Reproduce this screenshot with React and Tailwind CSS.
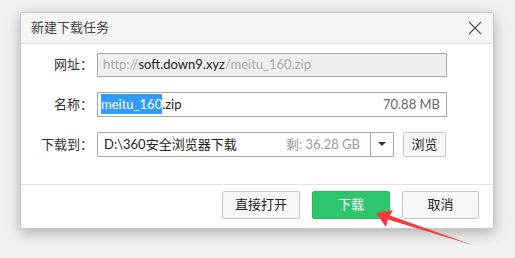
import React from "react";

const font = { fontFamily: 'Lato, "Noto Sans CJK SC", sans-serif' };

export default function App() {
  return (
    <div className="relative w-[515px] h-[258px] bg-[#f1f1f1] overflow-hidden" style={font}>
      <div className="absolute left-[20px] top-[12px] w-[474px] h-[217px] bg-white border border-[#c8c8c8] rounded-[2px] shadow-[0_4px_14px_rgba(0,0,0,0.28)] flex flex-col">
        <div className="h-[31px] bg-[#f5f5f5] border-b border-[#dedede] flex items-center justify-between pl-[10px] pr-[8px] shrink-0">
          <span className="text-[13px] text-[#444]">新建下载任务</span>
          <svg width="14" height="14" viewBox="0 0 14 14" className="mr-[3px]">
            <path d="M1 1L13 13M13 1L1 13" stroke="#555" strokeWidth="1.2" fill="none" />
          </svg>
        </div>
        <div className="flex flex-col pt-[9px] pl-[10px] gap-[15px] h-[141px] border-b border-[#e3e3e3]">
          <div className="flex items-center h-[24px]">
            <span className="w-[66px] text-right pr-[4px] text-[13px] text-[#333] whitespace-nowrap">网址：</span>
            <div className="w-[350px] h-[24px] bg-[#efefef] border border-[#a9a9a9] flex items-center px-[5px] text-[13px] text-[#aaa] whitespace-nowrap">
              http://<span className="text-[#222]">soft.down9.xyz</span>/meitu_160.zip
            </div>
          </div>
          <div className="flex items-center h-[25px]">
            <span className="w-[66px] text-right pr-[4px] text-[13px] text-[#333] whitespace-nowrap">名称：</span>
            <div className="w-[350px] h-[25px] bg-white border border-[#a9a9a9] flex items-center pl-[3px] pr-[6px] text-[13px] text-[#222] justify-between">
              <span className="whitespace-nowrap">
                <span className="bg-[#3399ff] text-white py-[2px]">meitu_160</span>.zip
              </span>
              <span className="text-[#666]">70.88 MB</span>
            </div>
          </div>
          <div className="flex items-center h-[25px]">
            <span className="w-[66px] text-right pr-[4px] text-[13px] text-[#333] whitespace-nowrap">下载到：</span>
            <div className="w-[297px] h-[25px] bg-white border border-[#a9a9a9] flex items-center text-[13px] rounded-[1px]">
              <span className="flex-1 pl-[6px] text-[#222] whitespace-nowrap">D:\360安全浏览器下载</span>
              <span className="pr-[10px] text-[#999] whitespace-nowrap">剩: 36.28 GB</span>
              <div className="w-[23px] h-full border-l border-[#a9a9a9] flex items-center justify-center">
                <svg width="8" height="5" viewBox="0 0 8 5"><path d="M0 0H8L4 4Z" fill="#333" /></svg>
              </div>
            </div>
            <button className="ml-[9px] w-[43px] h-[25px] bg-[#f7f7f7] border border-[#c9c9c9] rounded-[2px] text-[13px] text-[#222] flex items-center justify-center">浏览</button>
          </div>
        </div>
        <div className="flex items-start justify-end pt-[6px] pr-[14px] gap-[12px]">
          <button className="w-[78px] h-[28px] bg-[#f7f7f7] border border-[#c9c9c9] rounded-[2px] text-[13px] text-[#222] flex items-center justify-center">直接打开</button>
          <button className="w-[78px] h-[28px] bg-[#2ec56d] border border-[#27b562] rounded-[2px] text-[13px] text-white flex items-center justify-center">下载</button>
          <button className="w-[77px] h-[28px] bg-[#f7f7f7] border border-[#c9c9c9] rounded-[2px] text-[13px] text-[#222] flex items-center justify-center">取消</button>
        </div>
      </div>
      <svg className="absolute left-0 top-0" width="515" height="258" viewBox="0 0 515 258">
        <polygon
          points="376,213 393,210 390,215.5 474,245.5 388,219.5 386,227"
          fill="#f23c3c"
        />
      </svg>
    </div>
  );
}
